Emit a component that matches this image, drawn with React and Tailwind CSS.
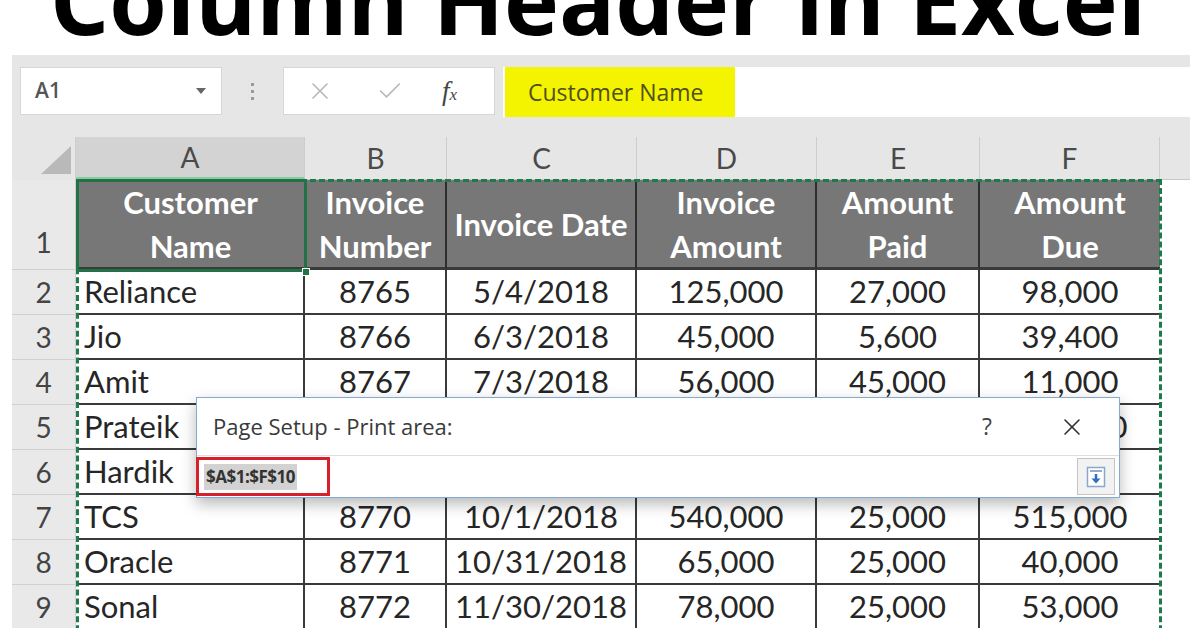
import React from 'react';
import { X, Check } from 'lucide-react';

const cellFont = { fontFamily: 'Lato, "Open Sans", sans-serif' };
const uiFont = { fontFamily: '"Open Sans", "Noto Sans", sans-serif' };

const columns = [
  { letter: 'A', w: 'w-[229px]', head: ['Customer', 'Name'] },
  { letter: 'B', w: 'w-[142px]', head: ['Invoice', 'Number'] },
  { letter: 'C', w: 'w-[190px]', head: ['Invoice Date'] },
  { letter: 'D', w: 'w-[180px]', head: ['Invoice', 'Amount'] },
  { letter: 'E', w: 'w-[163px]', head: ['Amount', 'Paid'] },
  { letter: 'F', w: 'w-[180px]', head: ['Amount', 'Due'] },
];

const rows = [
  ['Reliance', '8765', '5/4/2018', '125,000', '27,000', '98,000'],
  ['Jio', '8766', '6/3/2018', '45,000', '5,600', '39,400'],
  ['Amit', '8767', '7/3/2018', '56,000', '45,000', '11,000'],
  ['Prateik', '8768', '8/3/2018', '150,000', '50,000', '100,000'],
  ['Hardik', '8769', '9/1/2018', '75,000', '35,000', '40,000'],
  ['TCS', '8770', '10/1/2018', '540,000', '25,000', '515,000'],
  ['Oracle', '8771', '10/31/2018', '65,000', '25,000', '40,000'],
  ['Sonal', '8772', '11/30/2018', '78,000', '25,000', '53,000'],
];

const RangeIcon = () => (
  <svg width="20" height="22" viewBox="0 0 20 22">
    <rect x="1.5" y="1.5" width="17" height="19" fill="#fff" stroke="#8aa6c8" strokeWidth="1.5" />
    <line x1="4" y1="5" x2="16" y2="5" stroke="#6f8fb8" strokeWidth="1.5" />
    <path d="M10 8 V15" stroke="#2f6fc4" strokeWidth="2.5" />
    <path d="M5.5 12.5 L10 17.5 L14.5 12.5 Z" fill="#2f6fc4" />
  </svg>
);

const FormulaBar = () => (
  <div className="h-[82px] bg-[#e6e6e6] flex items-start pt-[12px]">
    <div className="ml-[8px] w-[202px] h-[48px] bg-white border border-[#d6d6d6] flex items-center justify-between pl-[14px] pr-[14px]">
      <span className="text-[21px] text-[#555] font-semibold" style={uiFont}>A1</span>
      <svg width="12" height="8" viewBox="0 0 12 8"><path d="M1 1 L11 1 L6 7 Z" fill="#666" /></svg>
    </div>
    <div className="w-[61px] h-[48px] flex flex-col items-center justify-center gap-[4px]">
      <span className="w-[3px] h-[3px] bg-[#9a9a9a]" />
      <span className="w-[3px] h-[3px] bg-[#9a9a9a]" />
      <span className="w-[3px] h-[3px] bg-[#9a9a9a]" />
    </div>
    <div className="w-[212px] h-[48px] bg-white border border-[#d6d6d6] flex items-center">
      <X className="ml-[22px] text-[#b8b8b8]" size={28} strokeWidth={1.4} />
      <Check className="ml-[42px] text-[#b8b8b8]" size={28} strokeWidth={1.4} />
      <span className="ml-[38px] text-[27px] italic text-[#444]" style={{ fontFamily: '"Liberation Serif", serif' }}>
        f<span className="text-[17px]">x</span>
      </span>
    </div>
    <div className="ml-[8px] flex-1 h-[50px] bg-white flex items-stretch">
      <div className="ml-[2px] w-[230px] bg-[#f4f400] flex items-center pl-[23px]">
        <span className="text-[23px] text-[#50501a]" style={uiFont}>Customer Name</span>
      </div>
    </div>
  </div>
);

const ColumnHeaders = () => (
  <div className="flex h-[43px] bg-[#e6e6e6]">
    <div className="w-[64px] h-full flex items-end justify-end pb-[6px] pr-[4px] border-r border-[#cfcfcf]">
      <svg width="30" height="28" viewBox="0 0 30 28"><path d="M30 0 L30 28 L0 28 Z" fill="#b9b9b9" /></svg>
    </div>
    {columns.map((c) => (
      <div
        key={c.letter}
        className={`${c.w} h-full flex items-center justify-center text-[28px] text-[#4a4a4a] border-r border-[#cdcdcd] ${c.letter === 'A' ? 'bg-[#d3d3d3] border-b-[3px] border-b-[#8cc9a5]' : 'border-b border-b-[#c8c8c8]'}`}
        style={cellFont}
      >
        {c.letter}
      </div>
    ))}
    <div className="w-[30px] h-full border-b border-[#c8c8c8]" />
  </div>
);

const HeaderRow = () => (
  <div className="flex h-[90px]">
    <div className="w-[64px] h-full bg-[#e9e9e9] border-b border-r border-[#cfcfcf] flex items-end justify-center pb-[6px] text-[28px] text-[#444]" style={cellFont}>
      1
    </div>
    {columns.map((c, i) => (
      <div
        key={c.letter}
        className={`${c.w} h-full bg-[#777777] border-b-[3px] border-b-[#3a3a3a] flex flex-col items-center justify-center text-white font-bold text-[31px] leading-[44px] ${i > 0 && i < 5 ? 'border-r-2 border-r-[#2e2e2e]' : ''}`}
        style={cellFont}
      >
        {c.head.map((h) => (
          <span key={h}>{h}</span>
        ))}
      </div>
    ))}
  </div>
);

const DataRow = ({ n, values }) => (
  <div className="flex h-[45px]">
    <div className="w-[64px] h-full bg-[#e9e9e9] border-b border-r border-[#d0d0d0] flex items-center justify-center text-[28px] text-[#444]" style={cellFont}>
      {n}
    </div>
    {columns.map((c, i) => (
      <div
        key={c.letter}
        className={`${c.w} h-full bg-white border-b-2 border-[#3a3a3a] flex items-center text-[31px] text-[#262626] ${i === 0 ? 'justify-start pl-[8px]' : 'justify-center'} ${i < 5 ? 'border-r-2' : ''}`}
        style={cellFont}
      >
        {values[i]}
      </div>
    ))}
  </div>
);

const PrintAreaDialog = () => (
  <div className="absolute left-[196px] top-[397px] w-[924px] h-[101px] bg-white border border-[#86a9d2] shadow-[0_6px_14px_rgba(0,0,0,0.28)] flex flex-col">
    <div className="h-[58px] flex items-center pl-[16px] border-b border-[#dedede]">
      <span className="text-[22px] text-[#3a3a3a]" style={uiFont}>Page Setup - Print area:</span>
      <span className="ml-auto text-[23px] text-[#444]" style={uiFont}>?</span>
      <X className="ml-[66px] mr-[33px] text-[#333]" size={28} strokeWidth={1.4} />
    </div>
    <div className="flex-1 flex items-center justify-between">
      <div className="ml-[-1px] w-[134px] h-[39px] border-[3px] border-[#d7202a] flex items-center pl-[5px]">
        <span className="bg-[#d2d2d2] px-[2px] text-[17px] font-bold text-[#333] leading-[26px] tracking-[-0.5px]" style={uiFont}>$A$1:$F$10</span>
      </div>
      <div className="mr-[4px] w-[38px] h-[37px] bg-[#f2f2f2] border border-[#c4c4c4] flex items-center justify-center">
        <RangeIcon />
      </div>
    </div>
  </div>
);

export default function App() {
  return (
    <div className="relative w-[1196px] h-[628px] overflow-hidden bg-white">
      <div className="h-[55px] flex justify-center items-start">
        <div className="mt-[-47px] text-[93px] leading-none font-bold text-black whitespace-nowrap" style={uiFont}>
          Column Header in Excel
        </div>
      </div>
      <div className="ml-[12px] w-[1178px]">
        <FormulaBar />
        <ColumnHeaders />
        <HeaderRow />
        {rows.map((r, i) => (
          <DataRow key={i} n={i + 2} values={r} />
        ))}
      </div>

      {/* marching ants around the print area */}
      <div className="absolute left-[76px] top-[179px] w-[1086px] h-[470px] border-[3px] border-dashed border-[#1f7a4a]" />
      {/* active cell A1 */}
      <div className="absolute left-[76px] top-[179px] w-[231px] h-[93px] border-[3px] border-[#217346]" />
      <div className="absolute left-[302px] top-[268px] w-[8px] h-[8px] bg-[#217346] border border-white" />

      <PrintAreaDialog />
    </div>
  );
}
